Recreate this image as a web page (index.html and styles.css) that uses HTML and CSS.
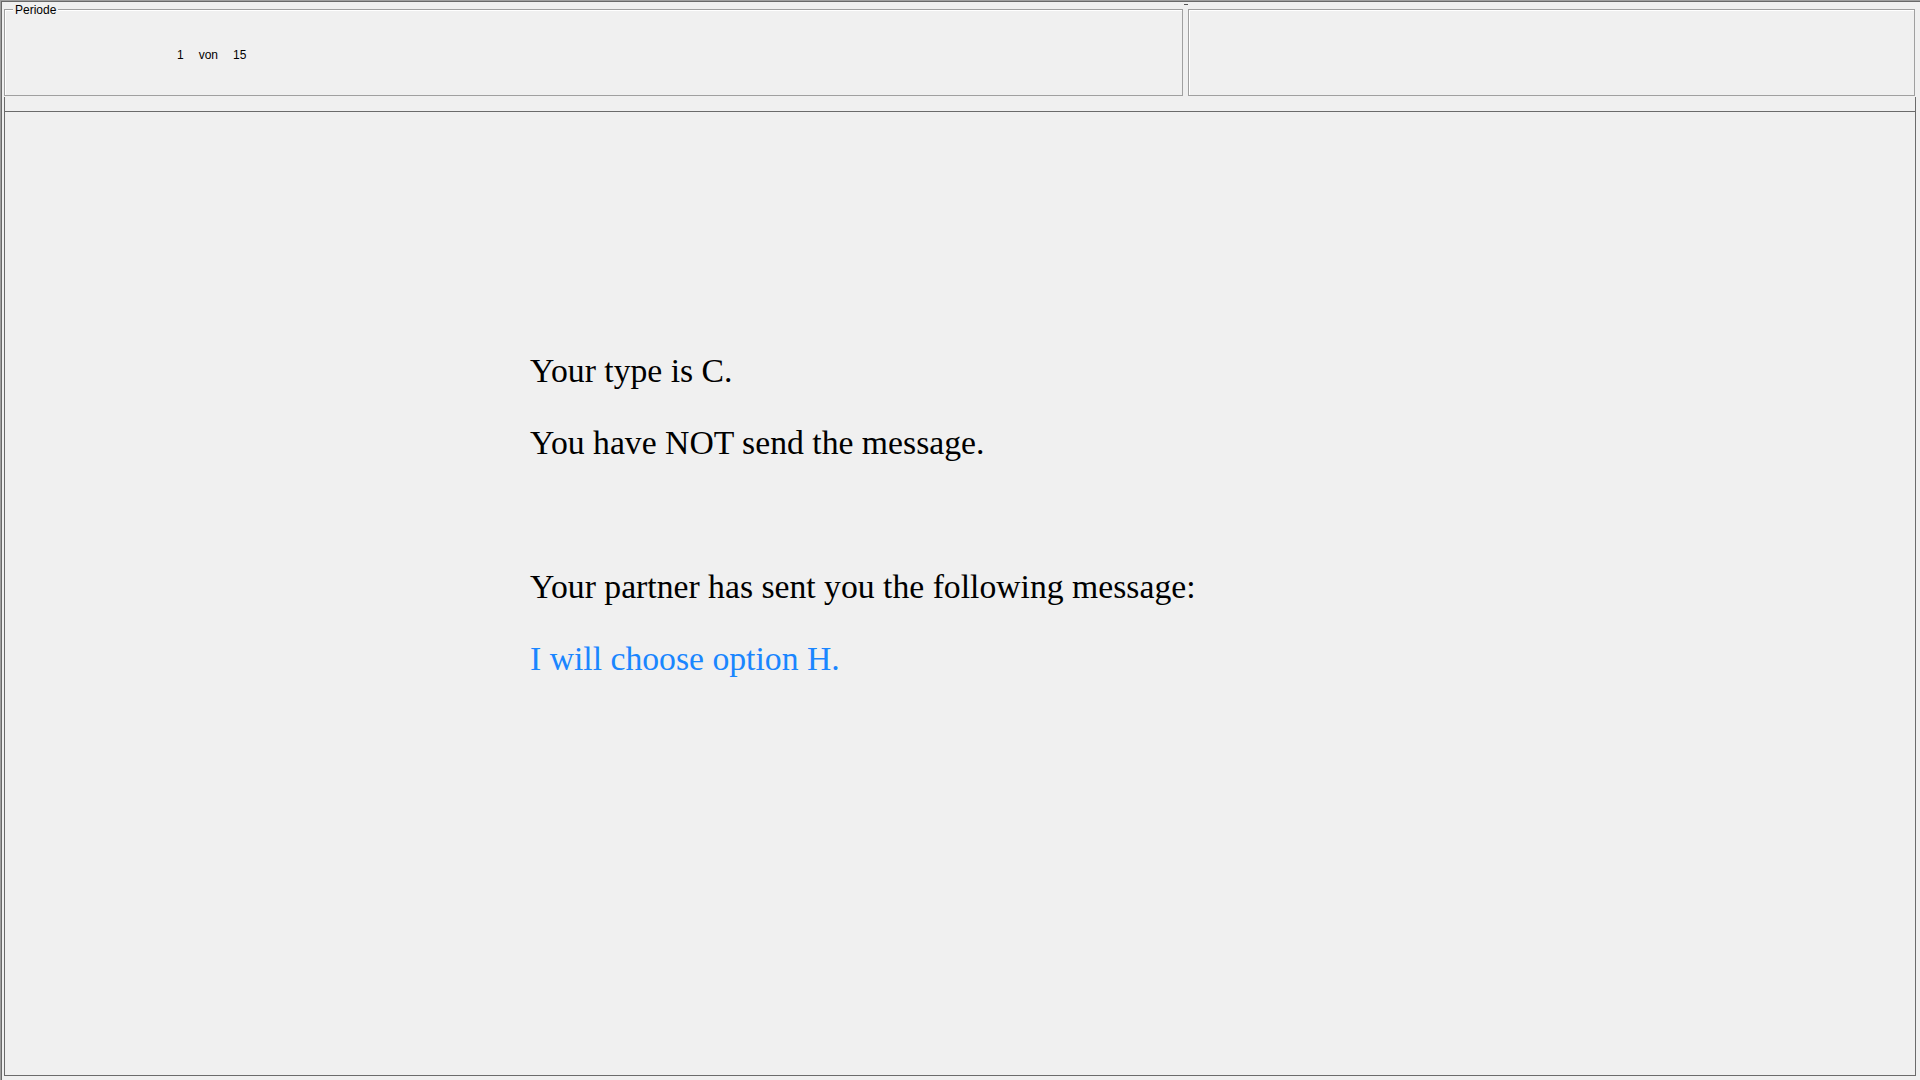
FILE: index.html
```html
<!DOCTYPE html>
<html lang="en">
<head>
<meta charset="utf-8">
<title>Periode</title>
<link rel="stylesheet" href="styles.css">
</head>
<body>
<div class="window">
  <div class="toprow">
    <div class="groupbox period">
      <div class="gb-title">Periode</div>
      <div class="period-row"><span class="num-a">1</span><span>von</span><span>15</span></div>
    </div>
    <div class="splitter"><div class="grip"></div></div>
    <div class="groupbox side"></div>
  </div>
  <div class="panel">
    <div class="panel-strip"></div>
    <div class="panel-body">
      <div class="msg">
        <p class="line">Your type is C.</p>
        <p class="line">You have NOT send the message.</p>
        <p class="line spacer"></p>
        <p class="line">Your partner has sent you the following message:</p>
        <p class="line partner">I will choose option H.</p>
      </div>
    </div>
  </div>
</div>
</body>
</html>
```

FILE: styles.css
```css
html, body {
  margin: 0;
  padding: 0;
}

body {
  background: #f0f0f0;
  font-family: "Liberation Sans", Arial, sans-serif;
  color: #000;
  overflow: hidden;
}

.window {
  height: 1080px;
  box-sizing: border-box;
  border-top: 1px solid #a0a0a0;
  border-left: 1px solid #a0a0a0;
  box-shadow: inset 1px 1px 0 #696969;
}

.toprow {
  display: flex;
  height: 96px;
  padding-left: 3px;
}

.groupbox {
  box-sizing: border-box;
  margin-top: 8px;
  height: 87px;
  border: 1px solid #a0a0a0;
  box-shadow: inset 1px 1px 0 #ffffff;
}

.period {
  width: 1179px;
}

.side {
  width: 727px;
}

.gb-title {
  width: fit-content;
  margin: -7px 0 0 8px;
  padding: 0 2px;
  background: #f0f0f0;
  font-size: 12px;
  line-height: 14px;
  color: #000;
}

.period-row {
  display: flex;
  gap: 15px;
  margin-top: 31px;
  padding-left: 172px;
  font-size: 12px;
  line-height: 14px;
}

.splitter {
  width: 5px;
}

.grip {
  margin: 3px 0 0 1px;
  width: 4px;
  height: 1px;
  background: #555;
}

.panel {
  box-sizing: border-box;
  margin-left: 3px;
  width: 1912px;
  height: 979px;
  border-left: 1px solid #6b6b6b;
  border-right: 1px solid #6b6b6b;
  border-bottom: 1px solid #6b6b6b;
}

.panel-strip {
  height: 14px;
}

.panel-body {
  border-top: 1px solid #6b6b6b;
  padding: 223px 0 0 525px;
}

.line {
  margin: 0;
  height: 72px;
  font-family: "Liberation Serif", "Times New Roman", serif;
  font-size: 33.7px;
  line-height: 72px;
  color: #000;
  white-space: nowrap;
}

.partner {
  color: #1a86ff;
}
```
